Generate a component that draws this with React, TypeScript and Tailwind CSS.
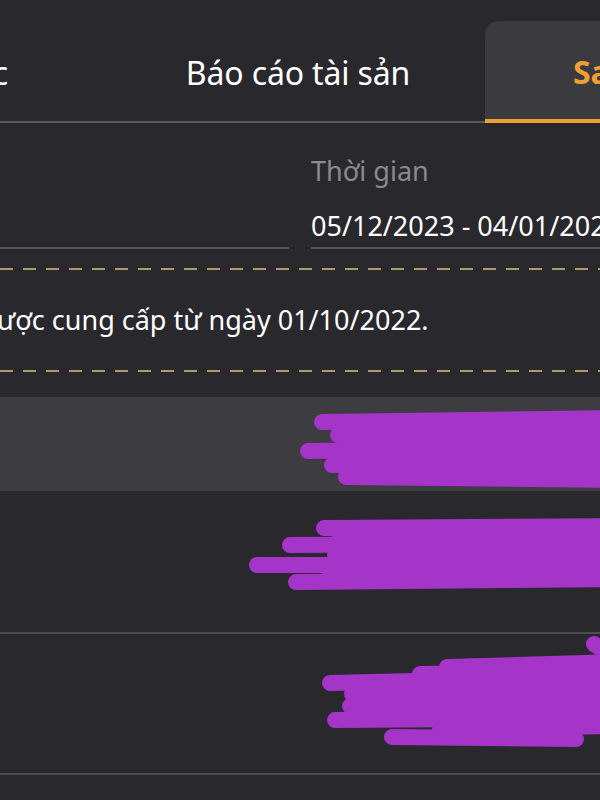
import React from "react"

const font = { fontFamily: '"Noto Sans", "DejaVu Sans", sans-serif' }

function Scribble({ strokes, w, h }: { strokes: string[]; w: number; h: number }) {
  return (
    <svg
      className="absolute left-0 top-0 pointer-events-none"
      width={w}
      height={h}
      viewBox={`0 0 ${w} ${h}`}
      fill="none"
    >
      {strokes.map((d, i) => (
        <path key={i} d={d} stroke="#a534c8" strokeWidth={16} strokeLinecap="round" strokeLinejoin="round" />
      ))}
    </svg>
  )
}

function Dashes() {
  return <div className="h-[2px] w-full bg-[repeating-linear-gradient(90deg,#ad9c6a_0_13px,transparent_13px_23px)]" />
}

export default function App() {
  return (
    <div className="w-[600px] h-[800px] overflow-hidden bg-[#29282d] text-white" style={font}>
      {/* Tabs */}
      <div className="relative h-[123px] border-b-2 border-[#5a595e]">
        <div className="flex h-full ml-[-263px] pt-[21px]">
          <div className="w-[374px] shrink-0 flex items-center justify-end pr-[103px] pt-[4px] text-[32px] tracking-[-0.15px] text-white whitespace-nowrap">
            Lệnh đặt trước
          </div>
          <div className="w-[374px] shrink-0 flex items-center justify-center pt-[4px] text-[32px] tracking-[-0.15px] text-white whitespace-nowrap">
            Báo cáo tài sản
          </div>
          <div className="w-[374px] shrink-0 flex items-center pl-[88px] pt-[4px] rounded-t-[14px] bg-[#3b3a3f] border-b-4 border-[#f0a032] mb-[-2px] text-[32px] font-bold tracking-[-0.15px] text-[#f0a032] whitespace-nowrap">
            Sao kê tiền
          </div>
        </div>
      </div>

      {/* Filters */}
      <div className="flex gap-[22px] pt-[30px]">
        <div className="w-[289px] shrink-0 flex flex-col">
          <div className="h-[94px]" />
          <div className="h-[2px] bg-[#56555a]" />
        </div>
        <div className="flex-1 flex flex-col whitespace-nowrap">
          <div className="h-[36px] leading-[36px] text-[27px] text-[#8b8a8f]">Thời gian</div>
          <div className="h-[58px] pt-[18px] leading-[38px] text-[27px] text-white">
            05/12/2023 - 04/01/2024
          </div>
          <div className="h-[2px] bg-[#56555a]" />
        </div>
      </div>

      {/* Notice */}
      <div className="pt-[19px]">
        <Dashes />
        <div className="h-[100px] flex items-center whitespace-nowrap text-[27px] text-white ml-[-3px]">
          ược cung cấp từ ngày 01/10/2022.
        </div>
        <Dashes />
      </div>

      {/* Rows */}
      <div className="pt-[25px]">
        <div className="relative h-[94px] bg-[#3d3c40]">
          <Scribble
            w={600}
            h={94}
            strokes={[
              "M322 25 L620 21",
              "M338 38 L620 34",
              "M308 54 L620 50",
              "M332 68 L620 66",
              "M346 80 L620 83",
              "M360 31 L620 28",
              "M355 46 L620 42",
              "M350 61 L620 58",
              "M352 74 L620 74",
            ]}
          />
        </div>
        <div className="relative h-[143px] border-b-2 border-[#4d4c51]">
          <Scribble
            w={600}
            h={143}
            strokes={[
              "M324 37 L620 35",
              "M290 54 L620 52",
              "M257 74 L345 74",
              "M296 91 L620 88",
              "M340 45 L620 44",
              "M335 64 L620 62",
              "M340 76 L620 74",
              "M330 82 L620 82",
            ]}
          />
        </div>
        <div className="relative h-[141px] border-b-2 border-[#4d4c51]">
          <Scribble
            w={600}
            h={141}
            strokes={[
              "M594 10 L612 22",
              "M447 33 L620 28",
              "M330 49 L620 42",
              "M352 60 L620 56",
              "M350 72 L620 68",
              "M335 86 L620 84",
              "M392 103 L576 105",
              "M440 95 L620 92",
              "M420 40 L620 36",
              "M360 80 L620 78",
              "M355 66 L620 62",
            ]}
          />
        </div>
      </div>
    </div>
  )
}
